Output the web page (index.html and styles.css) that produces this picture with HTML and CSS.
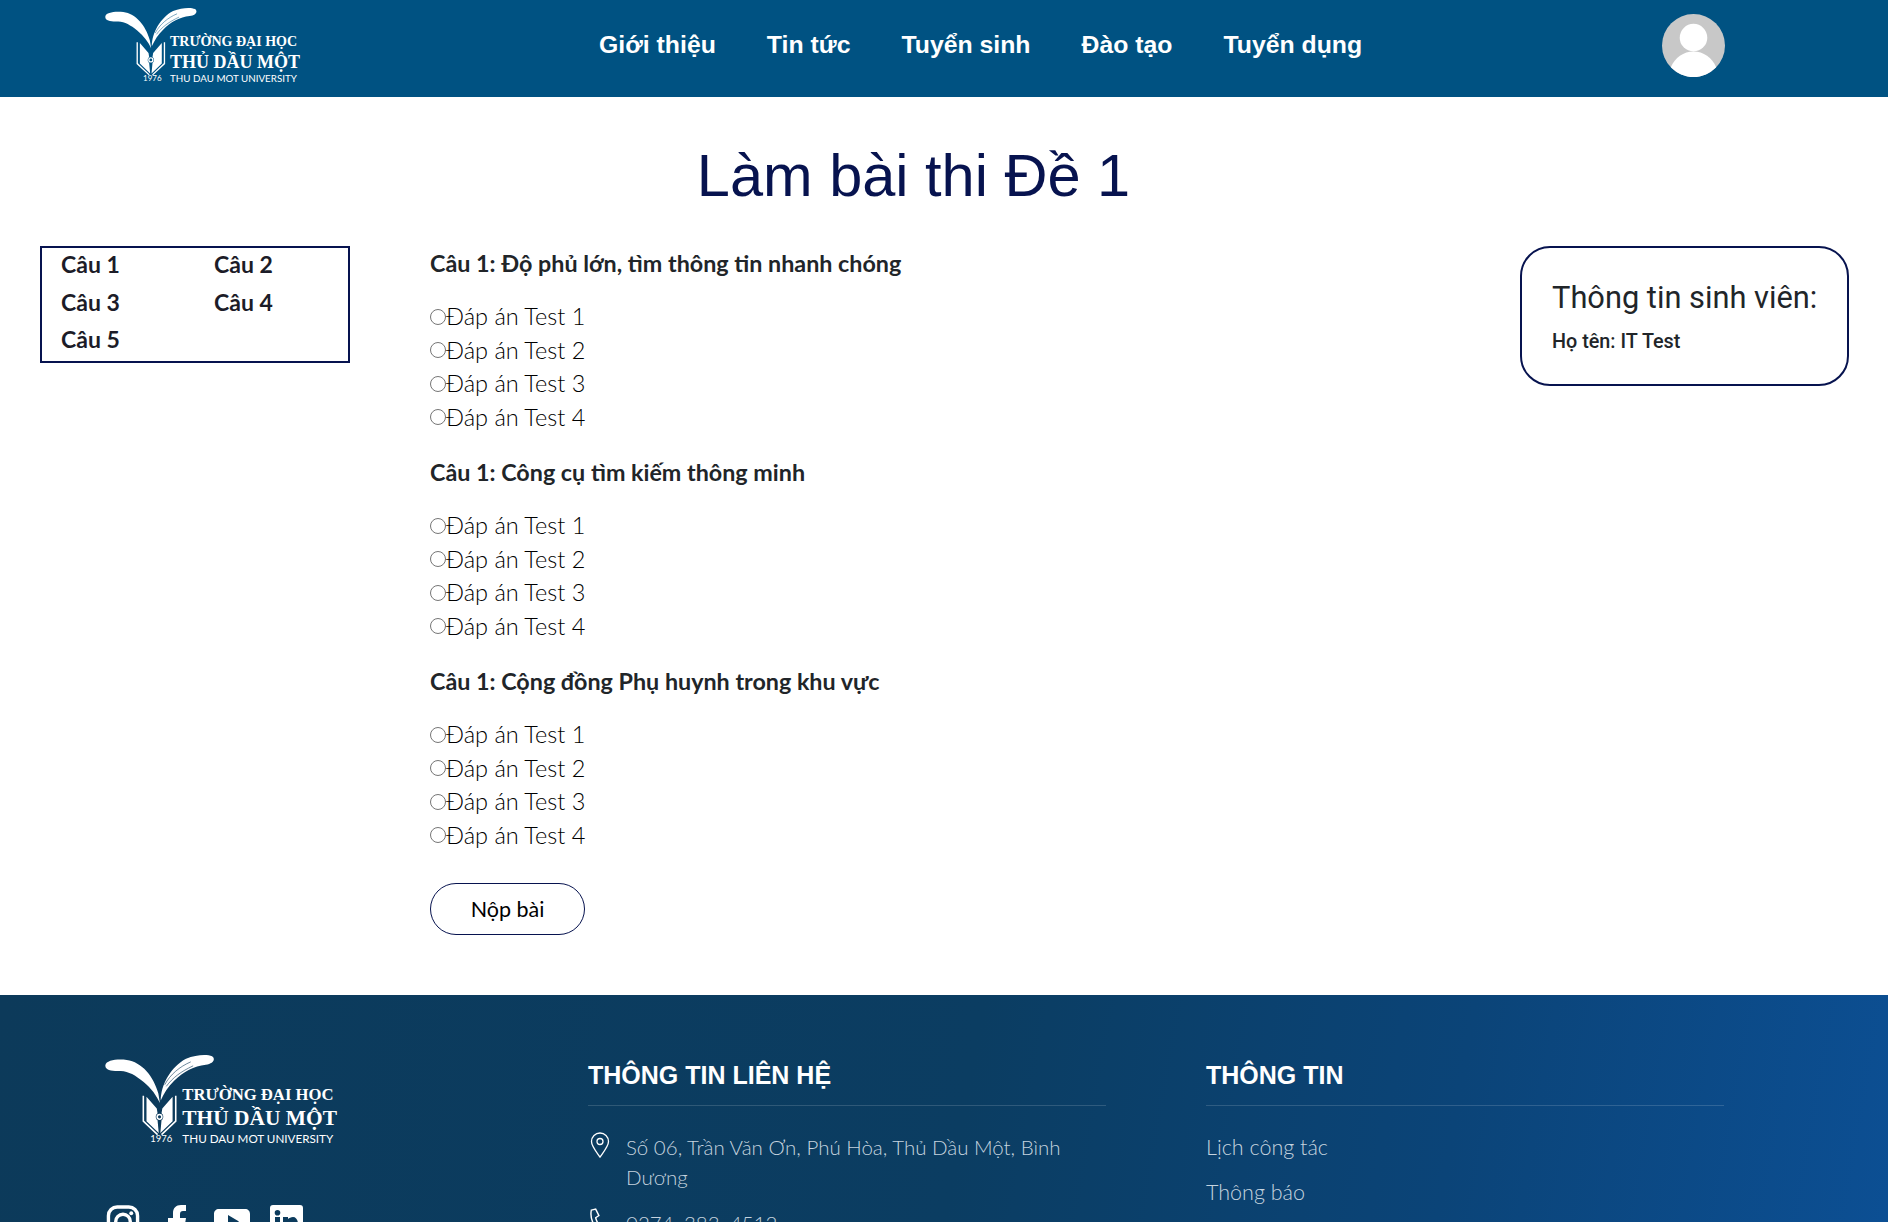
FILE: index.html
```html
<!DOCTYPE html>
<html lang="vi">
<head>
  <meta charset="UTF-8" />
  <meta name="viewport" content="width=device-width, initial-scale=1.0" />
  <title>Làm bài thi - Thủ Dầu Một</title>
  <link rel="stylesheet" href="styles.css">
</head>
<body>
  <svg class="sprites" aria-hidden="true">
    <symbol id="tdmu-mark" viewBox="45 25 280 210">
      <path class="mark-fill" d="M46 50C48 38 75 34 100 37 138 42 168 78 180 122L184 146C176 128 162 108 142 92 122 76 105 66 85 65 65 66 44 64 46 50Z"/>
      <path class="mark-fill" d="M186 140C186 100 212 54 250 34 275 24 303 22 316 28 326 35 318 47 300 49 270 52 244 66 220 90 205 104 194 122 186 140Z"/>
      <path class="mark-vein" d="M196 100C210 74 234 54 262 42M200 104C216 82 238 66 268 52"/>
      <path class="mark-fill" d="M150 130L176 160 178 172C172 176 172 186 178 190L181 222 150 192Z"/>
      <path class="mark-fill" d="M216 130L190 160 188 172C194 176 194 186 188 190L185 222 216 192Z"/>
      <circle class="mark-line" cx="183" cy="181" r="6"/>
      <path class="mark-line" d="M142 128V192L178 226M224 128V192L188 226"/>
    </symbol>
  </svg>

  <header class="top-bar">
    <a class="brand" href="#">
      <svg class="brand-mark"><use href="#tdmu-mark"/></svg>
      <span class="brand-text">
        <span class="brand-small">TRƯỜNG ĐẠI HỌC</span>
        <span class="brand-big">THỦ DẦU MỘT</span>
        <span class="brand-en"><i>1976</i>THU DAU MOT UNIVERSITY</span>
      </span>
    </a>
    <nav class="main-nav">
      <a href="#">Giới thiệu</a>
      <a href="#">Tin tức</a>
      <a href="#">Tuyển sinh</a>
      <a href="#">Đào tạo</a>
      <a href="#">Tuyển dụng</a>
    </nav>
    <svg class="avatar" viewBox="0 0 64 64" aria-hidden="true">
      <circle cx="32" cy="32" r="32" fill="#c8c8c8"/>
      <circle cx="32" cy="24" r="14" fill="#fff"/>
      <path d="M9 54C13 44 22 38 32 38s19 6 23 16C49 60 41 64 32 64S15 60 9 54Z" fill="#fff"/>
    </svg>
  </header>

  <h1 class="page-title">Làm bài thi Đề 1</h1>

  <main class="exam">
    <aside class="question-nav">
      <a href="#">Câu 1</a><a href="#">Câu 2</a>
      <a href="#">Câu 3</a><a href="#">Câu 4</a>
      <a href="#">Câu 5</a>
    </aside>

    <form class="questions">
      <section class="question">
        <h3>Câu 1: Độ phủ lớn, tìm thông tin nhanh chóng</h3>
        <label><input type="radio" name="q1">Đáp án Test 1</label>
        <label><input type="radio" name="q1">Đáp án Test 2</label>
        <label><input type="radio" name="q1">Đáp án Test 3</label>
        <label><input type="radio" name="q1">Đáp án Test 4</label>
      </section>
      <section class="question">
        <h3>Câu 1: Công cụ tìm kiếm thông minh</h3>
        <label><input type="radio" name="q2">Đáp án Test 1</label>
        <label><input type="radio" name="q2">Đáp án Test 2</label>
        <label><input type="radio" name="q2">Đáp án Test 3</label>
        <label><input type="radio" name="q2">Đáp án Test 4</label>
      </section>
      <section class="question">
        <h3>Câu 1: Cộng đồng Phụ huynh trong khu vực</h3>
        <label><input type="radio" name="q3">Đáp án Test 1</label>
        <label><input type="radio" name="q3">Đáp án Test 2</label>
        <label><input type="radio" name="q3">Đáp án Test 3</label>
        <label><input type="radio" name="q3">Đáp án Test 4</label>
      </section>
      <button class="submit-btn" type="button">Nộp bài</button>
    </form>

    <aside class="student-card">
      <h4>Thông tin sinh viên:</h4>
      <p>Họ tên: IT Test</p>
    </aside>
  </main>

  <footer class="site-footer">
    <div class="footer-brand">
      <a class="brand brand-lg" href="#">
        <svg class="brand-mark"><use href="#tdmu-mark"/></svg>
        <span class="brand-text">
          <span class="brand-small">TRƯỜNG ĐẠI HỌC</span>
          <span class="brand-big">THỦ DẦU MỘT</span>
          <span class="brand-en"><i>1976</i>THU DAU MOT UNIVERSITY</span>
        </span>
      </a>
      <div class="socials">
        <svg class="ig" viewBox="0 0 34 34"><rect x="2" y="2" width="30" height="30" rx="9" fill="none" stroke="#fff" stroke-width="3.5"/><circle cx="17" cy="17" r="7.500" fill="none" stroke="#fff" stroke-width="3.500"/><circle cx="25.500" cy="8.500" r="2" fill="#fff"/></svg>
        <svg class="fb" viewBox="0 0 18 33"><path fill="#fff" d="M5 33V19H0v-6h5V8c0-5 3-8 8-8h5v6h-3c-2 0-3 1-3 3v4h6l-1 6h-5v14Z"/></svg>
        <svg class="yt" viewBox="0 0 36 33"><path fill="#fff" d="M5 4h26c3 0 5 2 5 5v15c0 3-2 5-5 5H5c-3 0-5-2-5-5V9c0-3 2-5 5-5Zm9 6v13l11-6.500Z"/></svg>
        <svg class="li" viewBox="0 0 33 33"><path fill="#fff" fill-rule="evenodd" d="M3 0h27c2 0 3 1 3 3v27c0 2-1 3-3 3H3c-2 0-3-1-3-3V3c0-2 1-3 3-3Zm2 12v16h5V12Zm2.500-7a2.800 2.800 0 1 0 0 5.600 2.800 2.800 0 0 0 0-5.600ZM13 12v16h5v-8c0-2 1-3 3-3s2 1 2 3v8h5v-9c0-4-2-7-5-7-2 0-4 1-5 2v-2Z"/></svg>
      </div>
    </div>
    <div class="footer-col">
      <h5>THÔNG TIN LIÊN HỆ</h5>
      <ul class="contact-list">
        <li>
          <svg viewBox="0 0 20 26"><path fill="none" stroke="currentColor" stroke-width="1.300" d="M10 25C5 18 1.500 14 1.500 9.500a8.500 8.500 0 0 1 17 0C18.500 14 15 18 10 25Z"/><circle cx="10" cy="9.500" r="3" fill="none" stroke="currentColor" stroke-width="1.300"/></svg>
          <span>Số 06, Trần Văn Ơn, Phú Hòa, Thủ Dầu Một, Bình Dương</span>
        </li>
        <li>
          <svg viewBox="0 0 22 24"><path fill="none" stroke="currentColor" stroke-width="1.300" d="M3 2l4-1 3 6-3 2c1 4 3 7 6 9l3-2 4 5-3 2C9 24 1 12 3 2Z"/></svg>
          <span>0274. 383. 4512</span>
        </li>
      </ul>
    </div>
    <div class="footer-col">
      <h5>THÔNG TIN</h5>
      <ul class="link-list">
        <li>Lịch công tác</li>
        <li>Thông báo</li>
      </ul>
    </div>
  </footer>
</body>
</html>
```
FILE: styles.css
```css
html, body {
  height: 100%;
  overflow: hidden;
}
body {
  margin: 0;
  font-family: 'Lato', 'Noto Sans', sans-serif;
  background: #fff;
  color: #212529;
}
a {
  color: inherit;
  text-decoration: none;
}
.sprites {
  display: none;
}
.top-bar {
  height: 97px;
  box-sizing: border-box;
  background: #005282;
  display: flex;
  align-items: flex-start;
  padding: 8px 0 0 105px;
  color: #fff;
}
.brand {
  display: flex;
  align-items: flex-start;
  width: 195px;
  height: 81px;
  flex: none;
  color: #fff;
}
.brand-mark {
  width: 93px;
  height: 70px;
  flex: none;
  color: #005282;
}
.mark-fill {
  fill: #fff;
}
.mark-vein {
  fill: none;
  stroke: currentColor;
  stroke-width: 1.500;
}
.mark-line {
  fill: none;
  stroke: #fff;
  stroke-width: 4;
}
.brand-text {
  display: flex;
  flex-direction: column;
  margin: 25.500px 0 0 -28px;
  white-space: nowrap;
}
.brand-small {
  font: 700 14px/16px 'Liberation Serif', serif;
}
.brand-big {
  font: 700 18px/20px 'Liberation Serif', serif;
  margin-top: 2.500px;
}
.brand-en {
  font-size: 9.800px;
  line-height: 13px;
  position: relative;
}
.brand-en i {
  position: absolute;
  left: -27px;
  top: 0;
  font-size: 8px;
  font-style: normal;
}
.main-nav {
  display: flex;
  gap: 51px;
  margin: 22px 0 0 299px;
  width: 1063px;
  flex: none;
  font: 700 24.800px/30px 'Liberation Sans', sans-serif;
}
.avatar {
  width: 63px;
  height: 63px;
  margin-top: 6px;
  flex: none;
}
.page-title {
  margin: 45px 0 0;
  padding-right: 61px;
  text-align: center;
  font: 400 59.500px/68px 'Liberation Sans', sans-serif;
  color: #07134f;
}
.exam {
  display: flex;
  align-items: flex-start;
  margin-top: 36px;
  padding: 0 39px 0 40px;
}
.question-nav {
  width: 310px;
  box-sizing: border-box;
  border: 2px solid #07134f;
  display: grid;
  grid-template-columns: 153px 1fr;
  padding: 0 19px;
  font-size: 23px;
  font-weight: 700;
  color: #1c1c28;
  flex: none;
}
.question-nav a {
  height: 37.500px;
  line-height: 33px;
}
.questions {
  margin-left: 80px;
  flex: 1;
}
.question {
  margin-bottom: 21px;
}
.question h3 {
  margin: 0 0 20px;
  font-size: 23.300px;
  font-weight: 700;
  line-height: 34px;
  color: #212529;
}
.question label {
  display: flex;
  align-items: center;
  font-size: 23.500px;
  font-weight: 300;
  line-height: 33.500px;
  color: #000;
}
.question input {
  width: 16px;
  height: 16px;
  margin: 0;
  flex: none;
}
.submit-btn {
  display: block;
  width: 155px;
  height: 52px;
  margin-top: 31px;
  background: #fff;
  border: 1px solid #07134f;
  border-radius: 27px;
  font: 400 21.500px 'Lato', sans-serif;
  color: #000;
}
.student-card {
  width: 329px;
  height: 140px;
  box-sizing: border-box;
  border: 2px solid #07134f;
  border-radius: 30px;
  padding: 30px 10px 0 30px;
  flex: none;
}
.student-card h4 {
  margin: 0;
  font-family: 'Roboto', sans-serif;
  font-size: 30.800px;
  font-weight: 400;
  line-height: 40px;
  white-space: nowrap;
}
.student-card p {
  margin: 12px 0 0;
  font-family: 'Roboto', sans-serif;
  font-size: 19.800px;
  font-weight: 500;
  line-height: 24px;
}
.site-footer {
  margin-top: 60px;
  min-height: 400px;
  background: linear-gradient(100deg, #0c3a5a 0%, #0b3d62 50%, #0b4478 75%, #0c5096 100%);
  display: flex;
  padding: 60px 0 0 105px;
  color: #fff;
}
.footer-brand {
  width: 483px;
  flex: none;
}
.brand-lg {
  zoom: 1.190;
}
.brand-lg .brand-mark {
  color: #0c3a5a;
}
.socials {
  display: flex;
  gap: 28px;
  margin-top: 54px;
  padding-left: 1px;
  align-items: flex-start;
}
.socials svg {
  height: 33px;
  flex: none;
}
.ig {
  width: 34px;
}
.fb {
  width: 18px;
}
.yt {
  width: 36px;
}
.li {
  width: 33px;
  margin-left: -8px;
}
.footer-col {
  width: 518px;
  flex: none;
  margin-right: 100px;
}
.footer-col h5 {
  margin: 0;
  width: 518px;
  padding: 2px 0 12px;
  font: 700 25px/36px 'Liberation Sans', sans-serif;
  border-bottom: 1px solid rgba(255,255,255,0.15);
}
.contact-list, .link-list {
  list-style: none;
  margin: 26px 0 0;
  padding: 0;
  font-weight: 300;
  line-height: 30px;
  color: #c5d3df;
}
.contact-list {
  font-size: 20.500px;
}
.link-list {
  font-size: 21.500px;
}
.contact-list li {
  display: flex;
  gap: 14px;
  margin-bottom: 16px;
}
.contact-list svg {
  width: 24px;
  height: 26px;
  flex: none;
  color: #fff;
}
.link-list li {
  margin-bottom: 15px;
}
```
